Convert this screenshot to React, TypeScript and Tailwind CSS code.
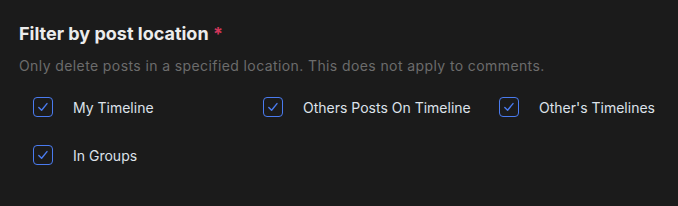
import React from "react";

function Check({ label }: { label: string }) {
  return (
    <label className="flex items-center gap-5 h-6">
      <span className="w-5 h-5 rounded-[4px] border-[1.5px] border-[#4a7bef] flex items-center justify-center shrink-0">
        <svg width="14" height="14" viewBox="0 0 14 14" fill="none">
          <path d="M2.8 7.4 L5.6 10.2 L11 3.6" stroke="#4a7bef" strokeWidth="1.4" strokeLinecap="round" strokeLinejoin="round" />
        </svg>
      </span>
      <span className="text-[14px] text-[#dde2ea] font-normal">{label}</span>
    </label>
  );
}

export default function App() {
  return (
    <div className="w-[678px] h-[206px] bg-[#1b1b1b] px-[19px] pt-[21px]" style={{ fontFamily: "Inter, 'Noto Sans', sans-serif" }}>
      <h2 className="text-[18px] font-bold text-[#ececec] leading-[26px]">
        Filter by post location <span className="text-[#d2375a]">*</span>
      </h2>
      <p className="mt-[9px] text-[14px] text-[#6c6c6c] leading-[20px] tracking-[0.4px]">
        Only delete posts in a specified location. This does not apply to comments.
      </p>
      <div className="mt-[19px] ml-[14px] grid grid-cols-[230px_236px_auto] gap-y-6">
        <Check label="My Timeline" />
        <Check label="Others Posts On Timeline" />
        <Check label="Other's Timelines" />
        <Check label="In Groups" />
      </div>
    </div>
  );
}
